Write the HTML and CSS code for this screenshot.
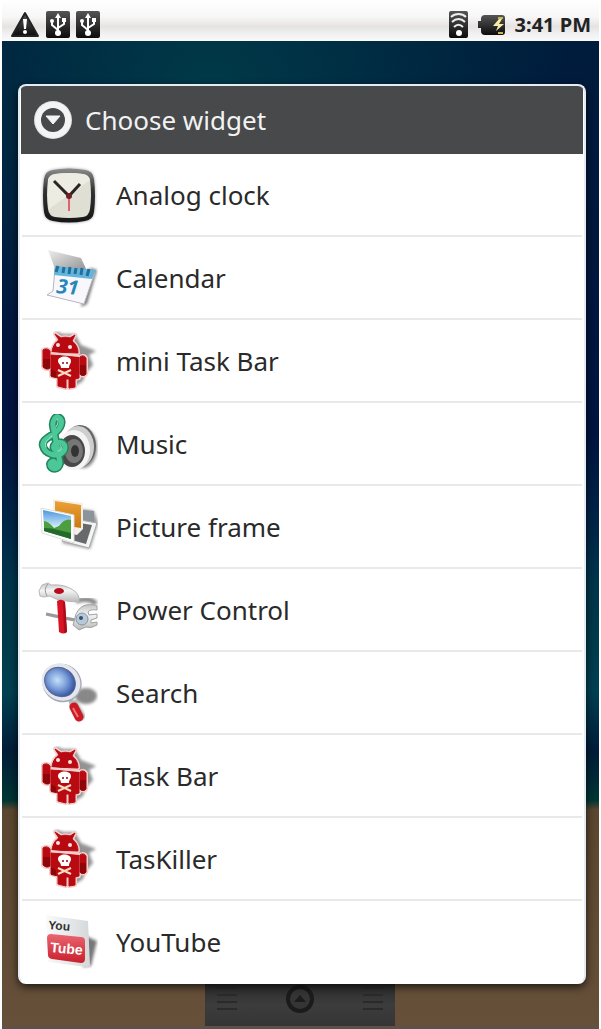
FILE: index.html
```
<!DOCTYPE html>
<html lang="en">
<head>
    <meta charset="UTF-8">
    <meta name="viewport" content="width=device-width, initial-scale=1.0">
    <title>Choose widget</title>
    <link rel="stylesheet" href="styles.css">
</head>
<body>
    <!-- shared icons -->
    <svg class="defs" width="0" height="0" aria-hidden="true">
        <defs>
            <linearGradient id="dark" x1="0" y1="0" x2="0" y2="1">
                <stop offset="0" stop-color="#555"/>
                <stop offset="1" stop-color="#0c0c0c"/>
            </linearGradient>
            <filter id="soft" x="-30%" y="-30%" width="160%" height="160%">
                <feGaussianBlur stdDeviation="1.5"/>
            </filter>
            <path id="droid-shape" d="M14 21c1-7 4-10 7-12l-4-6 6 4c3-1 6-1 9 0l5-3-3 6c4 3 6 7 6 12zM13 24l28 2v21l-4 1v8l-6 1v-9h-3v9l-8-2v-8l-7-2zM5 19c2-2 6-1 7 1v17c-2 2-5 1-7-1zM42 26c2-2 5-1 6 1v16c-1 2-5 2-6 0z"/>
            <path id="clef" d="M22 49c-1 8-10 7-10 1 2-5 7-2 4 1M22 49L15 12c-1-5 3-10 5-9 5 2 5 9-2 15C12 23 3 26 5 32c2 8 14 12 20 6 6-7-3-13-8-8-4 4 1 8 4 5"/>
        </defs>
        <symbol id="usb" viewBox="0 0 24 27">
            <rect width="24" height="27" rx="2" fill="url(#dark)"/>
            <path d="M12 5v17M12 19l-6-5v-4M12 17l6-4V8" fill="none" stroke="#fff" stroke-width="2"/>
            <path d="M12 2l3 5H9z" fill="#fff"/>
            <circle cx="12" cy="22" r="3" fill="#fff"/>
            <circle cx="6" cy="10" r="2" fill="#fff"/>
            <rect x="16" y="7" width="4" height="4" fill="#fff"/>
        </symbol>
        <symbol id="droid" viewBox="0 0 60 60">
            <path d="M17 0l8 3 12 0 6 11 15 6-7 4 4 10-7 8-3 8-9 6-5-8z" fill="#666" opacity=".7" filter="url(#soft)"/>
            <use href="#droid-shape" fill="#f5cccc" stroke="#f5cccc" stroke-width="4" stroke-linejoin="round"/>
            <use href="#droid-shape" fill="#b80a10" stroke="#b80a10"/>
            <path d="M5 28h7v9c-2 2-5 1-7-1zM42 34h6v9c-1 2-5 2-6 0zM13 38l5 3v6l-5-1z" fill="#7a0508" opacity=".7"/>
            <path d="M13 22l28 3" stroke="#f5cccc" stroke-width="2"/>
            <circle cx="20" cy="14" r="2" fill="#fbe4e4"/>
            <circle cx="32" cy="16" r="2" fill="#fbe4e4"/>
            <path d="M20 30c0-6 13-6 13 0 0 3-2 3-2 7h-8c0-4-3-4-3-7z" fill="#fff"/>
            <circle cx="25" cy="32" r="1" fill="#900"/>
            <circle cx="29" cy="32" r="1" fill="#900"/>
            <path d="M20 39l13 6M20 45l13-6" stroke="#f6dcc4" stroke-width="2"/>
        </symbol>
    </svg>

    <div class="screen">
        <header class="status-bar">
            <div class="status-icons">
                <svg width="30" height="27" viewBox="0 0 30 27" role="img" aria-label="Warning">
                    <path d="M15 2l13 23H2z" fill="url(#dark)" stroke="#222" stroke-width="2" stroke-linejoin="round"/>
                    <path d="M13 8h4l-1 10h-2z" fill="#fff"/>
                    <circle cx="15" cy="21" r="2" fill="#fff"/>
                </svg>
                <svg width="24" height="27" role="img" aria-label="USB connected"><use href="#usb"/></svg>
                <svg width="24" height="27" role="img" aria-label="USB debugging"><use href="#usb"/></svg>
            </div>
            <div class="status-info">
                <svg width="19" height="27" viewBox="0 0 19 27" role="img" aria-label="Wi-Fi">
                    <rect width="19" height="27" rx="2" fill="url(#dark)"/>
                    <path d="M2 6c4-4 11-4 15 0M3 11c4-4 9-4 13 0M5 16c3-3 6-3 9 0" fill="none" stroke="#eee" stroke-width="2"/>
                    <circle cx="10" cy="22" r="3" fill="#fff"/>
                </svg>
                <svg width="27" height="22" viewBox="0 0 27 22" role="img" aria-label="Battery charging">
                    <path d="M0 7h3V5q0-4 4-4h17q3 0 3 3v14q0 3-3 3H7q-4 0-4-4v-3H0z" fill="url(#dark)"/>
                    <path d="M20 3h5v2h-5zM20 18h5v2h-5z" fill="#c9b94c"/>
                    <path d="M21 5l-6 7h5l-2 5 8-7h-5l3-5z" fill="#f7ecaa"/>
                </svg>
                <span class="clock">3:41 PM</span>
            </div>
        </header>

        <main class="wallpaper">
            <section class="dialog" role="dialog" aria-labelledby="dialog-title">
                <div class="dialog-header">
                    <svg width="40" height="40" viewBox="0 0 40 40" aria-hidden="true">
                        <circle cx="20" cy="20" r="19" fill="#dedede"/>
                        <circle cx="20" cy="20" r="18" fill="#f4f4f4"/>
                        <circle cx="20" cy="20" r="12" fill="#47494a"/>
                        <path d="M13 16h14l-7 8z" fill="#f4f4f4" stroke="#f4f4f4" stroke-linejoin="round"/>
                    </svg>
                    <h1 id="dialog-title">Choose widget</h1>
                </div>
                <ul class="widget-list">
                    <li>
                        <button type="button" class="widget">
                            <svg class="icon" viewBox="0 0 60 60" aria-hidden="true">
                                <defs>
                                    <linearGradient id="rim" x1="0" y1="0" x2="0" y2="1">
                                        <stop offset="0" stop-color="#8c8c8c"/>
                                        <stop offset=".4" stop-color="#333"/>
                                        <stop offset="1" stop-color="#161616"/>
                                    </linearGradient>
                                </defs>
                                <path d="M15 5q16-3 32 0 8 1 9 9 2 17 0 33-1 8-9 9-16 3-32 0-8-1-9-9-2-16 0-33 1-8 9-9z" fill="#999" filter="url(#soft)"/>
                                <path d="M15 5q16-3 32 0 8 1 9 9 2 17 0 33-1 8-9 9-16 3-32 0-8-1-9-9-2-16 0-33 1-8 9-9z" fill="url(#rim)"/>
                                <path d="M17 9q14-2 28 0 6 1 7 6 2 15 0 29-1 7-7 8-14 2-28 0-6-1-7-8-2-14 0-29 1-5 7-6z" fill="#dfdfd3"/>
                                <path d="M17 9q14-2 28 0 6 1 7 6L11 44q-2-14-1-29 1-5 7-6z" fill="#ecece2"/>
                                <path d="M31 30v16" stroke="#e0626a" stroke-width="2"/>
                                <path d="M16 16l15 15 11-12" fill="none" stroke="#2c2323" stroke-width="3"/>
                                <circle cx="31" cy="31" r="3" fill="#702226"/>
                            </svg>
                            <span>Analog clock</span>
                        </button>
                    </li>
                    <li>
                        <button type="button" class="widget">
                            <svg class="icon" viewBox="0 0 60 60" aria-hidden="true">
                                <defs>
                                    <linearGradient id="flap" x1="0" y1="0" x2="1" y2="1">
                                        <stop offset="0" stop-color="#eee"/>
                                        <stop offset="1" stop-color="#8b8b8b"/>
                                    </linearGradient>
                                </defs>
                                <path d="M52 20l7 2-10 34-6 3z" fill="#777" filter="url(#soft)"/>
                                <path d="M10 2l33 8 7 15-33-4z" fill="url(#flap)"/>
                                <path d="M17 20l40 4-11 32-37-9 6-4z" fill="#f8f8fc" stroke="#b9b3c4"/>
                                <path d="M17 18l41 4-4 9-38-4z" fill="#65b4d9"/>
                                <path d="M20 18l-2 6M26 19l-1 6M32 19l-1 7M38 20l-1 6M44 20l-1 7M51 21l-2 7" stroke="#226f9d" stroke-width="3"/>
                                <text x="18" y="45" class="calendar-day" transform="rotate(5 18 45)">31</text>
                            </svg>
                            <span>Calendar</span>
                        </button>
                    </li>
                    <li>
                        <button type="button" class="widget">
                            <svg class="icon" aria-hidden="true"><use href="#droid"/></svg>
                            <span>mini Task Bar</span>
                        </button>
                    </li>
                    <li>
                        <button type="button" class="widget">
                            <svg class="icon" viewBox="0 0 60 60" aria-hidden="true">
                                <ellipse cx="45" cy="34" rx="14" ry="20" fill="#888" filter="url(#soft)"/>
                                <ellipse cx="42" cy="32" rx="16" ry="21" fill="#666"/>
                                <ellipse cx="40" cy="33" rx="16" ry="21" fill="#cfcfcf"/>
                                <ellipse cx="36" cy="36" rx="16" ry="20" fill="#f4f4f4"/>
                                <ellipse cx="34" cy="37" rx="13" ry="16" fill="#484848"/>
                                <ellipse cx="36" cy="37" rx="9" ry="12" fill="#777"/>
                                <ellipse cx="37" cy="37" rx="4" ry="6" fill="#333"/>
                                <g fill="none" stroke-linecap="round" stroke-linejoin="round">
                                    <use href="#clef" stroke="#23845c" stroke-width="8"/>
                                    <use href="#clef" stroke="#4cc898" stroke-width="5"/>
                                    <path d="M14 22c-5 4-8 7-6 11M19 5c2 2 1 5-1 8M22 31c3 3 1 6-2 6" stroke="#a4ecd0"/>
                                </g>
                            </svg>
                            <span>Music</span>
                        </button>
                    </li>
                    <li>
                        <button type="button" class="widget">
                            <svg class="icon" viewBox="0 0 60 60" aria-hidden="true">
                                <defs>
                                    <linearGradient id="sky" x1="0" y1="0" x2="0" y2="1">
                                        <stop offset="0" stop-color="#4a96dc"/>
                                        <stop offset=".6" stop-color="#d6effa"/>
                                    </linearGradient>
                                    <linearGradient id="amber" x1="0" y1="0" x2="0" y2="1">
                                        <stop offset="0" stop-color="#eda035"/>
                                        <stop offset="1" stop-color="#c87a12"/>
                                    </linearGradient>
                                </defs>
                                <path d="M42 12l14 2 4 12-8 26-28-6z" fill="#999" filter="url(#soft)"/>
                                <path d="M45 13l11 1v12l-12-2z" fill="#8b949b"/>
                                <path d="M42 23l17 3-8 25-27-7z" fill="#f5f5f5" stroke="#aaa"/>
                                <path d="M42 26l12 2-6 19-18-5z" fill="#67696c"/>
                                <path d="M15 2l30 4v26l-6 6-24-5z" fill="#f4f0e8"/>
                                <path d="M17 4l26 4v23l-26-4z" fill="url(#amber)"/>
                                <path d="M3 11l33 7v28L4 36z" fill="#fff" stroke="#ddd"/>
                                <path d="M5 13l28 6v23L6 34z" fill="url(#sky)"/>
                                <path d="M6 24q4 0 10 7l5-2q6-8 12-6v19L6 34z" fill="#4d9e40"/>
                                <path d="M6 31q8 0 14 2l13 3v6L6 34z" fill="#226b2b"/>
                            </svg>
                            <span>Picture frame</span>
                        </button>
                    </li>
                    <li>
                        <button type="button" class="widget">
                            <svg class="icon" viewBox="0 0 60 60" aria-hidden="true">
                                <defs>
                                    <linearGradient id="steel" x1="0" y1="0" x2="0" y2="1">
                                        <stop offset="0" stop-color="#c4c4c4"/>
                                        <stop offset=".4" stop-color="#f4f4f4"/>
                                        <stop offset="1" stop-color="#b8b8b8"/>
                                    </linearGradient>
                                </defs>
                                <path d="M38 21q14-4 20 3" fill="none" stroke="#888" stroke-width="5" filter="url(#soft)"/>
                                <path d="M8 34q18 4 29 6" fill="none" stroke="#9a9a9a" stroke-width="3"/>
                                <path d="M38 34q4-8 10-9 8-1 11 1v4q-7-1-9 2l1 3 8-1v4l-6 2v3l6-1v3q-6 4-11 2l-7 3-6-5z" fill="url(#steel)" stroke="#a2a2a2"/>
                                <circle cx="44" cy="39" r="6" fill="#b7c8d7" stroke="#8495a2"/>
                                <circle cx="43" cy="38" r="2" fill="#344f70"/>
                                <path d="M4 5l6-2 3 2q14-1 22 5 7 4 6 12-11 0-23-3l-6-3-6 1-4-1-1-5z" fill="url(#steel)" stroke="#b8b8b8"/>
                                <path d="M10 4q-5 5-1 12" fill="none" stroke="#999"/>
                                <ellipse cx="21" cy="11" rx="5" ry="3" fill="#b70c1b"/>
                                <path d="M19 21q5-3 8 1l2 30q-3 3-8 0z" fill="#d81424"/>
                                <path d="M25 21l2 1 2 30-3 1z" fill="#aa0d1a"/>
                            </svg>
                            <span>Power Control</span>
                        </button>
                    </li>
                    <li>
                        <button type="button" class="widget">
                            <svg class="icon" viewBox="0 0 60 60" aria-hidden="true">
                                <defs>
                                    <radialGradient id="lens" cx=".4" cy=".5" r=".6">
                                        <stop offset="0" stop-color="#c5e0f8"/>
                                        <stop offset=".5" stop-color="#7da0da"/>
                                        <stop offset="1" stop-color="#304f9e"/>
                                    </radialGradient>
                                </defs>
                                <ellipse cx="48" cy="33" rx="11" ry="8" fill="#888" filter="url(#soft)"/>
                                <path d="M34 39l10 17" stroke="#888" stroke-width="8" filter="url(#soft)"/>
                                <path d="M32 36l4 7" stroke="#b7b7bd" stroke-width="5"/>
                                <path d="M36 44l5 10" stroke="#cb1b24" stroke-width="9" stroke-linecap="round"/>
                                <path d="M35 45l5 9" stroke="#ef7478" stroke-width="2"/>
                                <ellipse cx="24" cy="20" rx="20" ry="19" transform="rotate(35 24 20)" fill="#a4a7b4"/>
                                <ellipse cx="23" cy="19" rx="20" ry="18" transform="rotate(35 23 19)" fill="#e4e7ee"/>
                                <ellipse cx="22" cy="19" rx="16" ry="14" transform="rotate(35 22 19)" fill="url(#lens)" stroke="#59658c"/>
                            </svg>
                            <span>Search</span>
                        </button>
                    </li>
                    <li>
                        <button type="button" class="widget">
                            <svg class="icon" aria-hidden="true"><use href="#droid"/></svg>
                            <span>Task Bar</span>
                        </button>
                    </li>
                    <li>
                        <button type="button" class="widget">
                            <svg class="icon" aria-hidden="true"><use href="#droid"/></svg>
                            <span>TasKiller</span>
                        </button>
                    </li>
                    <li>
                        <button type="button" class="widget">
                            <svg class="icon" viewBox="0 0 60 60" aria-hidden="true">
                                <defs>
                                    <linearGradient id="card" x1="0" y1="0" x2="1" y2="0">
                                        <stop offset="0" stop-color="#fafafa"/>
                                        <stop offset="1" stop-color="#d4d8da"/>
                                    </linearGradient>
                                    <linearGradient id="tube" x1="0" y1="0" x2="0" y2="1">
                                        <stop offset="0" stop-color="#ea6670"/>
                                        <stop offset="1" stop-color="#c91f2c"/>
                                    </linearGradient>
                                </defs>
                                <path d="M48 24l11 5-6 25-8 1z" fill="#777" filter="url(#soft)"/>
                                <path d="M8 3l42 6 2 45-3 1-39-5z" fill="url(#card)"/>
                                <path d="M13 22l30 3q4 0 4 4v18q0 4-4 4l-29-4q-4-1-4-4L9 26q0-4 4-4z" fill="url(#tube)"/>
                                <text x="10" y="17" class="logo-you" transform="rotate(5 10 17)">You</text>
                                <text x="12" y="40" class="logo-tube" transform="rotate(5 12 40)">Tube</text>
                            </svg>
                            <span>YouTube</span>
                        </button>
                    </li>
                </ul>
            </section>

            <div class="tray">
                <span class="grip"></span>
                <svg width="30" height="30" viewBox="0 0 30 30" aria-hidden="true">
                    <circle cx="15" cy="15" r="12" fill="#353535" stroke="#1b1b1b" stroke-width="4"/>
                    <path d="M9 18l6-7 6 7z" fill="#1c1c1c"/>
                </svg>
                <span class="grip"></span>
            </div>
        </main>
    </div>
</body>
</html>
```

FILE: styles.css
```
* {
    box-sizing: border-box;
}
body {
    margin: 0;
    background-color: #fff;
    font-family: "Noto Sans", "Open Sans", sans-serif;
    color: #2a2a2a;
}
.defs {
    position: absolute;
}
svg {
    display: block;
    flex-shrink: 0;
}
.screen {
    min-height: 100vh;
    padding: 0 2px;
    display: flex;
    flex-direction: column;
}
.status-bar {
    height: 41px;
    padding: 8px 8px 0;
    display: flex;
    justify-content: space-between;
    align-items: center;
    background: linear-gradient(#fff 0%, #f8f7f7 40%, #e6e2e2 65%, #efefef 80%, #fafafa 100%);
}
.status-icons, .status-info {
    display: flex;
    align-items: center;
    gap: 6px;
}
.status-info {
    gap: 10px;
}
.clock {
    font-size: 20px;
    line-height: 30px;
    font-weight: bold;
    color: #222;
}
.wallpaper {
    flex: 1;
    padding: 43px 13px 0 16px;
    display: flex;
    flex-direction: column;
    background:
        linear-gradient(transparent 77%, #5b4630 78%, #66503a 100%),
        linear-gradient(transparent 50%, #003a4a 60%, #004052 66%, #001c38 72%, #003634 77%),
        radial-gradient(ellipse 60% 30% at 35% 5%, #003a48, transparent),
        linear-gradient(#001c3c, #001440 40%, #00304c 55%);
    border-bottom: 2px solid #585252;
}
.dialog {
    border: 2px solid #e4ebf2;
    border-bottom-color: #fff;
    border-radius: 8px;
    background-color: #fff;
    box-shadow: 0 3px 8px rgba(0,0,0,0.7);
    overflow: hidden;
    z-index: 1;
}
.dialog-header {
    height: 68px;
    padding: 0 12px;
    display: flex;
    align-items: center;
    gap: 12px;
    background-color: #47494a;
    margin: 0 1px;
}
.dialog-header h1 {
    margin: 0;
    font-size: 26px;
    line-height: 32px;
    font-weight: normal;
    color: #f2f2f2;
}
.widget-list {
    list-style-type: none;
    margin: 0;
    padding: 0;
}
.widget-list li {
    margin: 0 2px;
    border-bottom: 2px solid #e9e9e9;
}
.widget-list li:last-child {
    border-bottom: none;
}
.widget {
    width: 100%;
    height: 81px;
    padding: 0 16px;
    display: flex;
    align-items: center;
    gap: 18px;
    border: none;
    background: none;
    font-family: inherit;
    font-size: 26px;
    color: inherit;
    text-align: left;
    cursor: pointer;
}
.widget:hover {
    background-color: #f3f3f3;
}
.icon {
    width: 60px;
    height: 60px;
}
.calendar-day {
    font-size: 20px;
    font-weight: bold;
    font-style: italic;
    fill: #2787b8;
}
.logo-you {
    font-family: "Liberation Sans", sans-serif;
    font-size: 12px;
    font-weight: bold;
    fill: #333;
}
.logo-tube {
    font-family: "Liberation Sans", sans-serif;
    font-size: 14px;
    font-weight: bold;
    fill: #fff;
}
.tray {
    width: 190px;
    height: 42px;
    margin-left: 187px;
    padding: 0 12px 12px;
    display: flex;
    justify-content: space-between;
    align-items: center;
    background: linear-gradient(#2c2c2c, #3c3c3c 50%, #353535);
}
.grip {
    width: 20px;
    height: 24px;
    background: repeating-linear-gradient(#2a2a2a 0 2px, transparent 2px 7px);
}
```
